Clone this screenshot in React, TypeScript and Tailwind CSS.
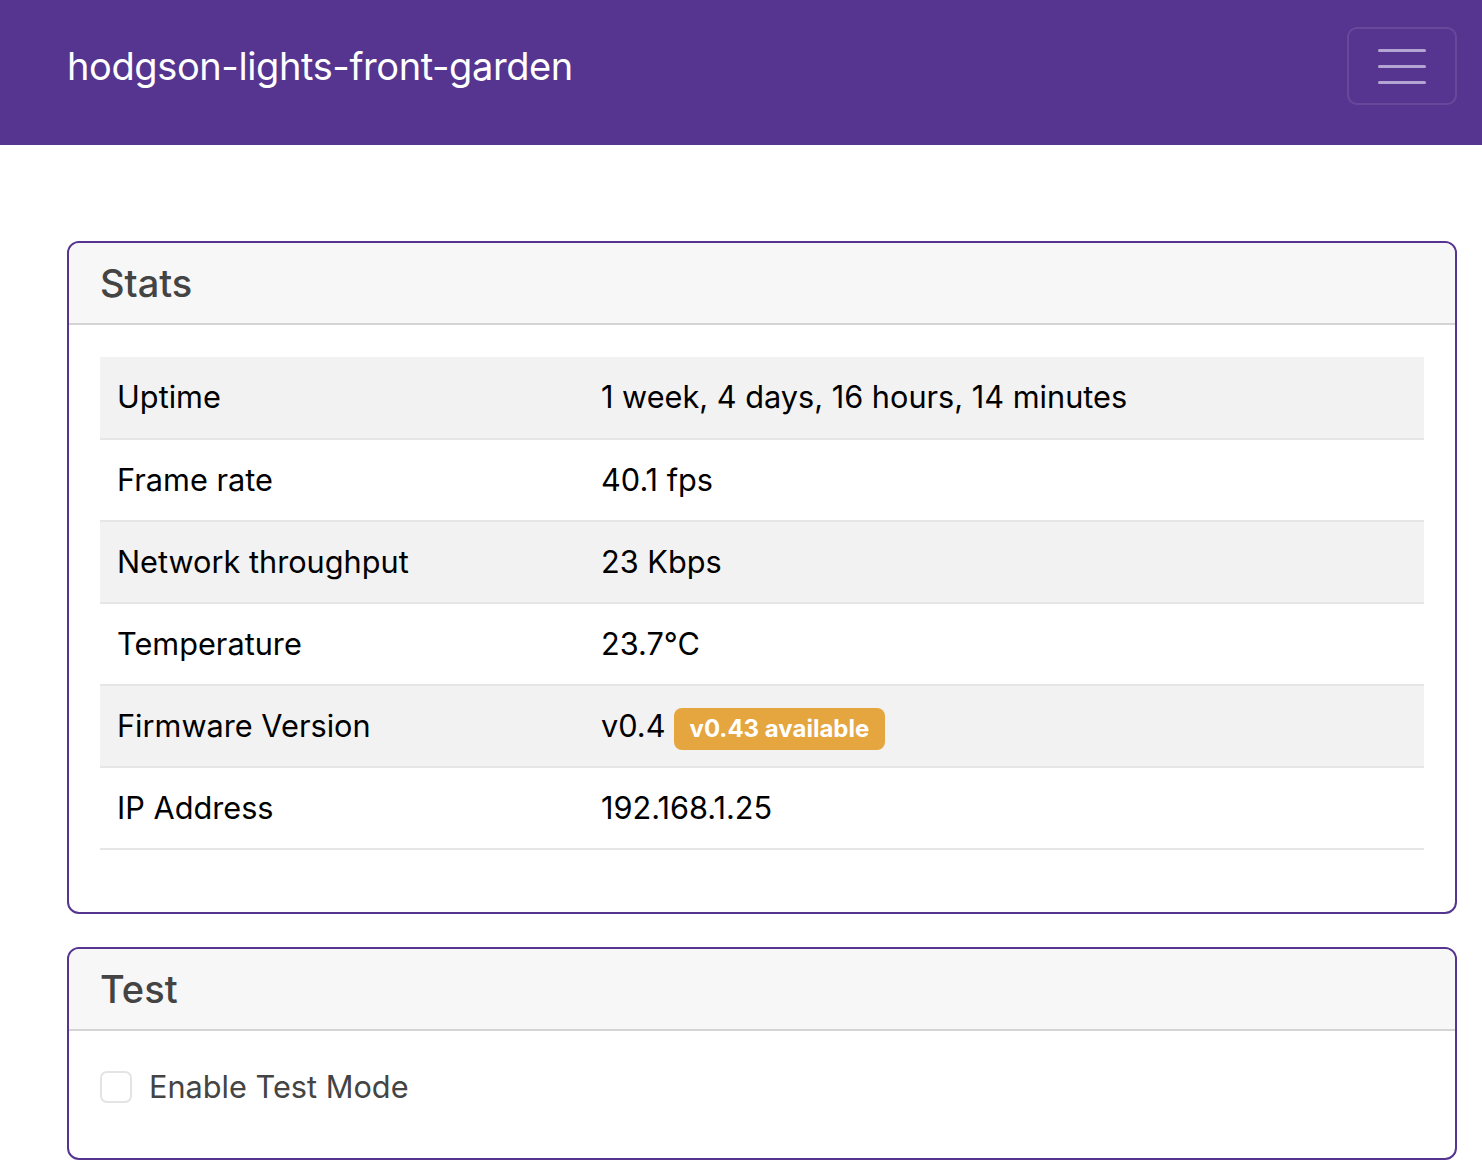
import React from 'react';

const stats: { label: string; value: string; badge?: string }[] = [
  { label: 'Uptime', value: '1 week, 4 days, 16 hours, 14 minutes' },
  { label: 'Frame rate', value: '40.1 fps' },
  { label: 'Network throughput', value: '23 Kbps' },
  { label: 'Temperature', value: '23.7°C' },
  { label: 'Firmware Version', value: 'v0.4', badge: 'v0.43 available' },
  { label: 'IP Address', value: '192.168.1.25' },
];

const Card = ({ title, children }: { title: string; children: React.ReactNode }) => (
  <div className="border-2 border-[#55358f] rounded-[12px] overflow-hidden bg-white">
    <div className="h-[82px] bg-[#f7f7f7] border-b-2 border-[#d4d4d4] flex items-center pl-[31px] pr-[32px]">
      <h5 className="text-[38px] font-medium text-[#444] leading-none">{title}</h5>
    </div>
    <div className="px-[31px] pt-[32px]">{children}</div>
  </div>
);

export default function App() {
  return (
    <div className="min-h-screen bg-white font-['Inter','Liberation_Sans',sans-serif]">
      <nav className="h-[145px] bg-[#55358f] flex items-center justify-between pl-[67px] pr-[25px] pb-[13px]">
        <span className="text-white text-[38px] tracking-[-0.4px]">hodgson-lights-front-garden</span>
        <button className="w-[110px] h-[78px] border-2 border-white/10 rounded-[10px] flex flex-col items-center justify-center gap-[13px]">
          <span className="block w-[48px] h-[3px] rounded-full bg-[#b3a4d1]"></span>
          <span className="block w-[48px] h-[3px] rounded-full bg-[#b3a4d1]"></span>
          <span className="block w-[48px] h-[3px] rounded-full bg-[#b3a4d1]"></span>
        </button>
      </nav>

      <main className="px-[67px] pr-[25px] pt-[96px] flex flex-col gap-[33px]">
        <Card title="Stats">
          <table className="w-full border-collapse mb-[62px]">
            <tbody>
              {stats.map((s, i) => (
                <tr key={s.label} className={`border-b-2 border-[#e6e6e6] ${i % 2 === 0 ? 'bg-[#f2f2f2]' : 'bg-white'}`}>
                  <td className="h-[82px] w-[484px] pl-[17px] text-[30.7px] text-black">{s.label}</td>
                  <td className="h-[82px] pl-[17px] text-[30.7px] text-black">
                    <div className="flex items-center">
                      <span>{s.value}</span>
                      {s.badge && (
                        <span className="ml-[8px] mt-[5px] bg-[#e5a640] text-white text-[24px] font-bold rounded-[8px] px-[16px] py-[5px] leading-[32px]">
                          {s.badge}
                        </span>
                      )}
                    </div>
                  </td>
                </tr>
              ))}
            </tbody>
          </table>
        </Card>

        <Card title="Test">
          <label className="flex items-center gap-[17px] pt-[1px] pb-[48px]">
            <span className="w-[32px] h-[32px] border-2 border-[#e4e4e4] rounded-[7px] bg-white"></span>
            <span className="text-[30.7px] text-[#444]">Enable Test Mode</span>
          </label>
        </Card>
      </main>
    </div>
  );
}
